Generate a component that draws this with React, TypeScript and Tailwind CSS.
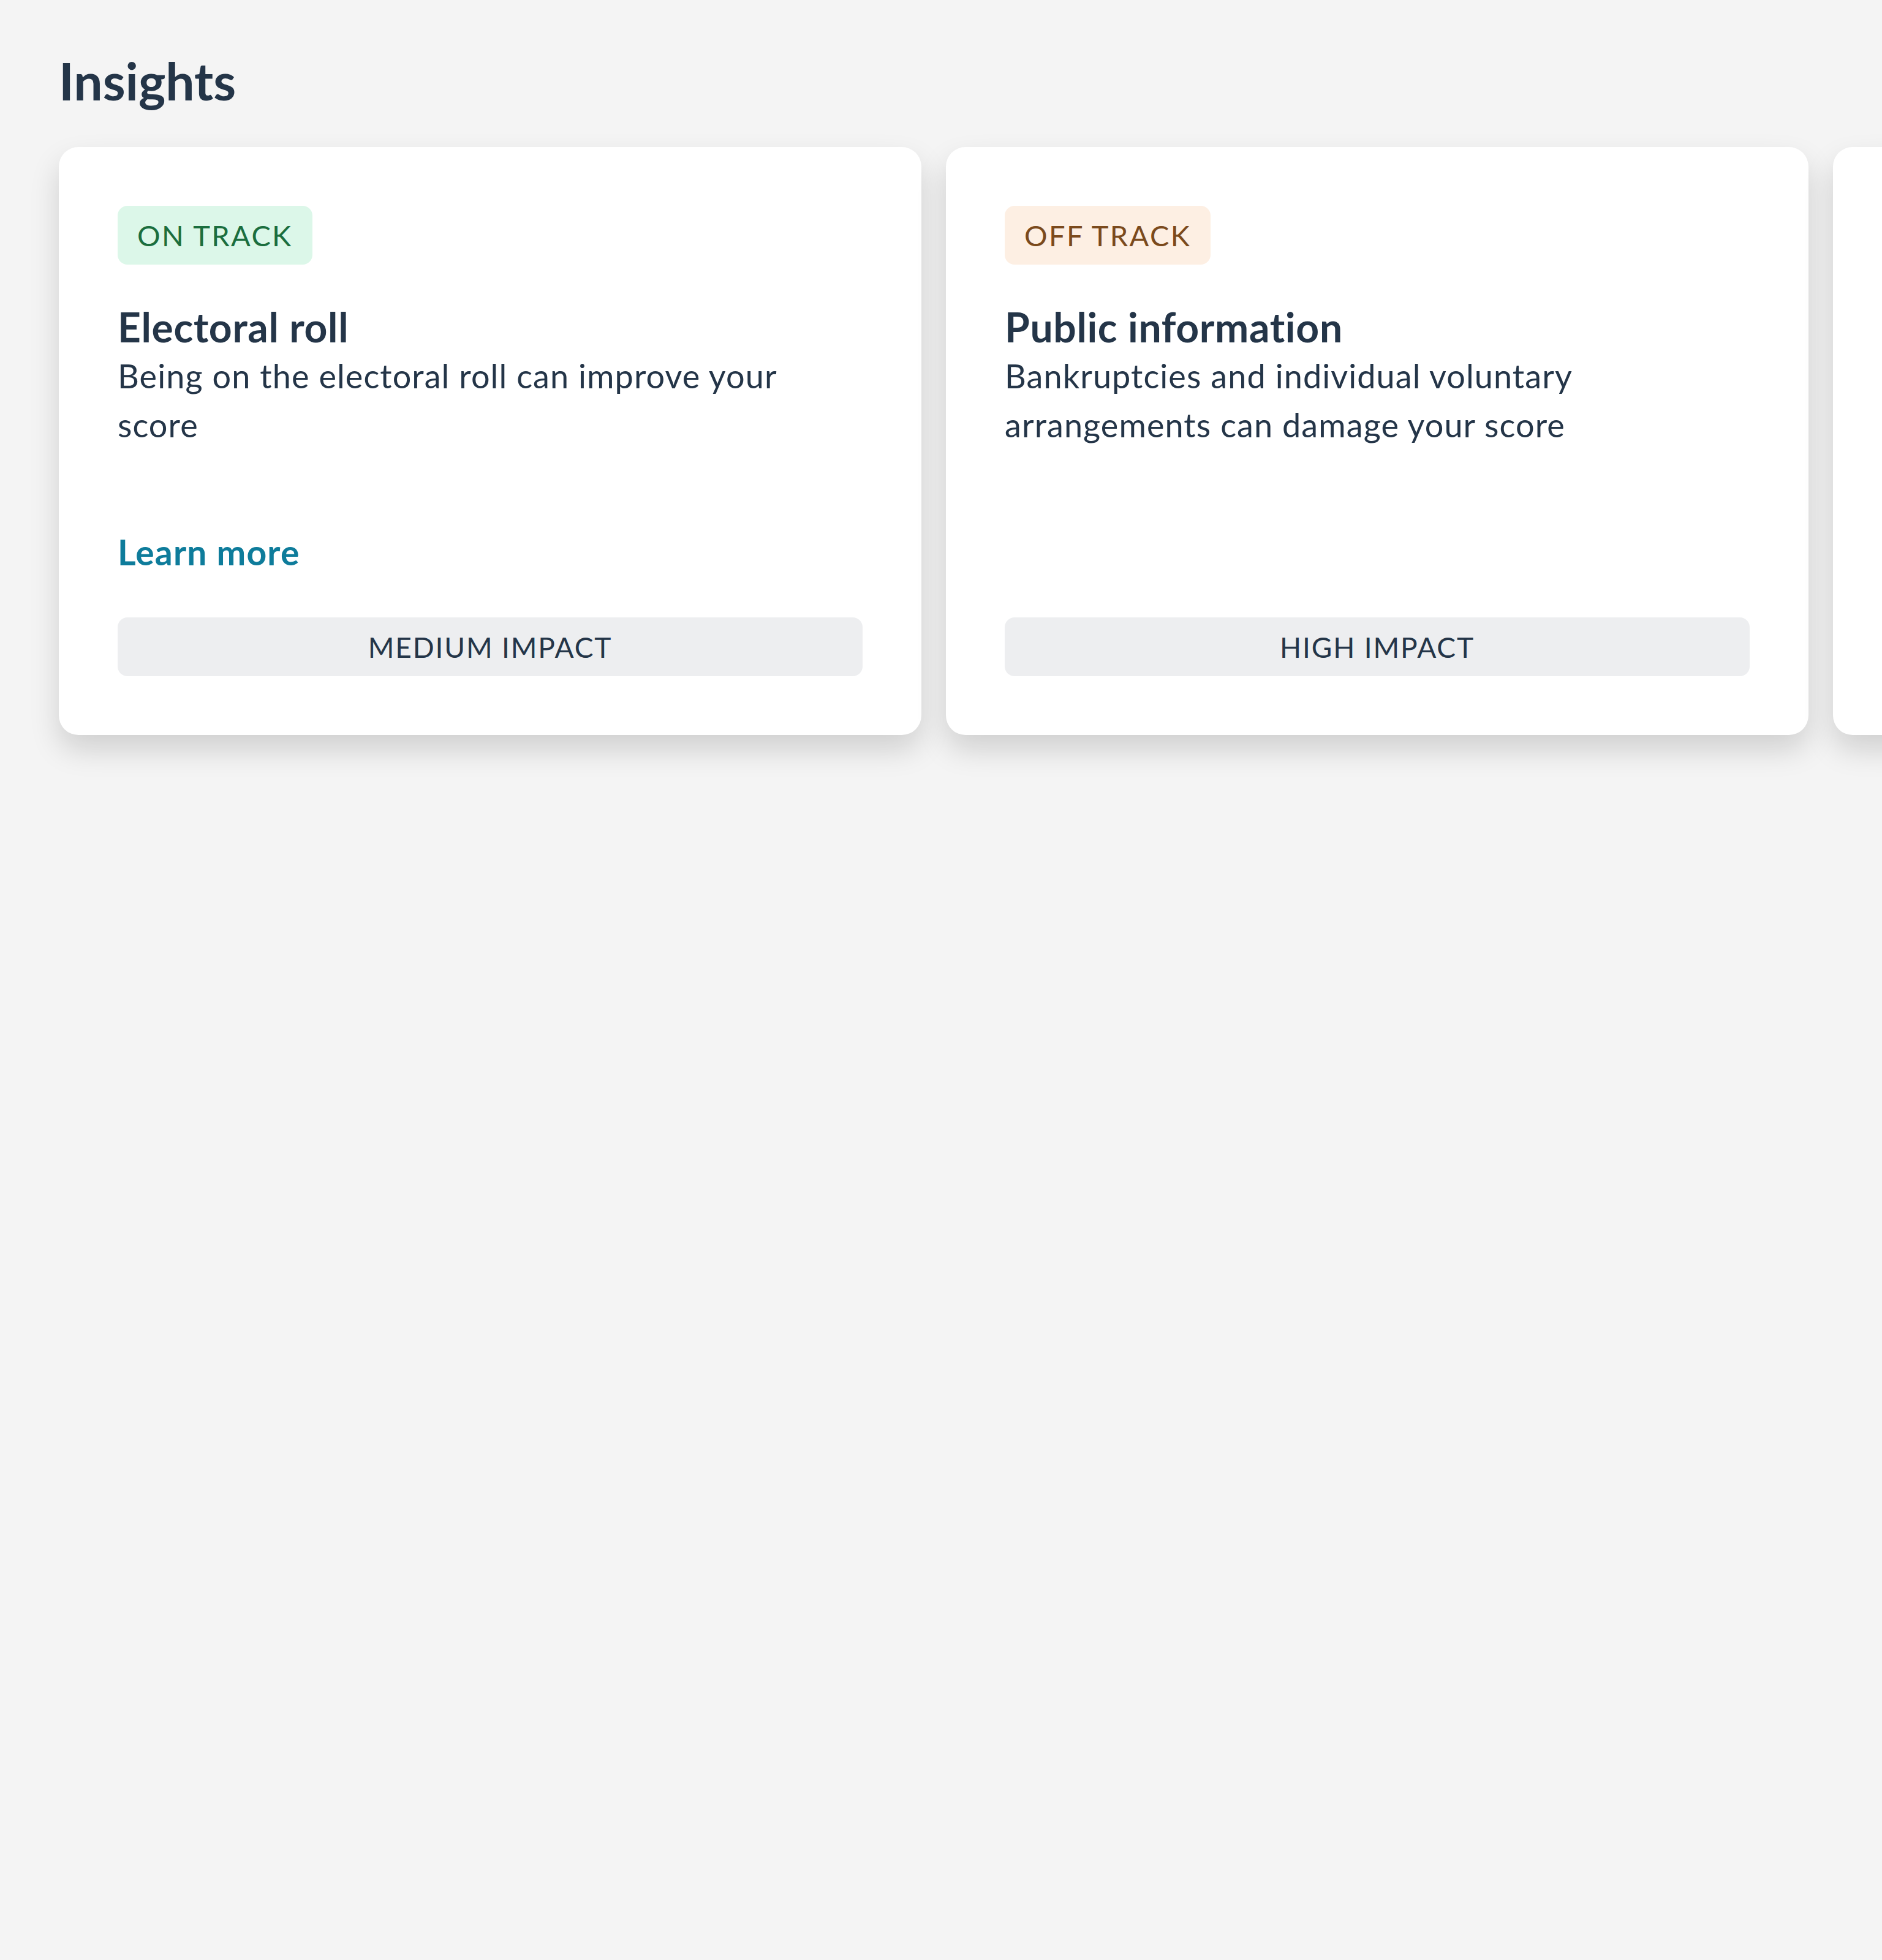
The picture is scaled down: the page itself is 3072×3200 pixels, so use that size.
const insights = [
  {
    status: 'ON TRACK',
    tone: 'good',
    title: 'Electoral roll',
    text: 'Being on the electoral roll can improve your score',
    link: 'Learn more',
    impact: 'MEDIUM IMPACT',
  },
  {
    status: 'OFF TRACK',
    tone: 'bad',
    title: 'Public information',
    text: 'Bankruptcies and individual voluntary arrangements can damage your score',
    impact: 'HIGH IMPACT',
  },
];

export default function App() {
  return (
    <div className="min-h-[3200px] overflow-hidden bg-[#f4f4f4] font-['Lato',sans-serif] text-[#243548]">
      <h1 className="pl-24 pt-[84px] text-[84px] font-bold leading-[96px]">Insights</h1>
      <div className="mt-[60px] flex gap-10 pl-24">
        {insights.map((item) => (
          <InsightCard key={item.title} {...item} />
        ))}
        {/* next card peeks in from the right edge */}
        <div className="h-[960px] w-[1408px] shrink-0 rounded-[32px] bg-white shadow-[0_24px_48px_rgba(0,0,0,0.15)]" />
      </div>
    </div>
  );
}

function InsightCard({
  status,
  tone,
  title,
  text,
  link,
  impact,
}: {
  status: string;
  tone: string;
  title: string;
  text: string;
  link?: string;
  impact: string;
}) {
  const badgeClasses =
    tone === 'good' ? 'bg-[#dcf7e9] text-[#1b6e3e]' : 'bg-[#fdefe3] text-[#7b4a1c]';

  return (
    <div className="flex h-[960px] w-[1408px] shrink-0 flex-col rounded-[32px] bg-white p-24 shadow-[0_24px_48px_rgba(0,0,0,0.15)]">
      <span
        className={`flex h-24 items-center self-start rounded-2xl px-8 text-[47px] leading-none tracking-[0.05em] ${badgeClasses}`}
      >
        {status}
      </span>
      <h2 className="mt-[62px] text-[66px] font-bold leading-[80px] tracking-[0.01em]">{title}</h2>
      <p className="mt-0 max-w-[1140px] text-[54px] leading-[80px] tracking-[0.02em]">{text}</p>
      <div className="mt-auto">
        {link && (
          <a
            href="#"
            className="mb-[67px] block text-[57px] font-bold leading-[80px] tracking-[0.02em] text-[#0e7c9b]"
          >
            {link}
          </a>
        )}
        <div className="flex h-24 items-center justify-center rounded-2xl bg-[#edeef0] text-[46px] tracking-[0.04em]">
          {impact}
        </div>
      </div>
    </div>
  );
}
